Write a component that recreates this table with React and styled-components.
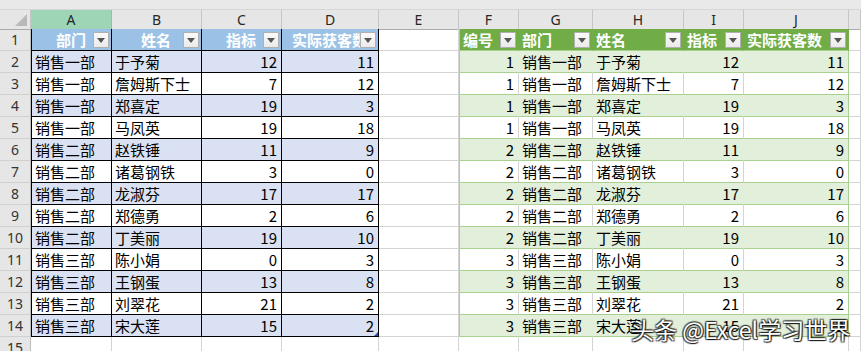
import React from "react";
import styled, { createGlobalStyle, css } from "styled-components";

const COLS = ["A", "B", "C", "D", "E", "F", "G", "H", "I", "J", ""];
const TEMPLATE = "31px 81px 90px 80px 97px 80px 60px 74px 91px 60px 105px 12px";

const GRID = "#d4d4d4";
const BLUE_HEAD = "#9bc2e6";
const BLUE_BAND = "#d9e1f2";
const GREEN_HEAD = "#70ad47";
const GREEN_BAND = "#e2efda";
const GREEN_LINE = "#a9d08e";

const rows = [
  [1, "销售一部", "于予菊", 12, 11],
  [1, "销售一部", "詹姆斯下士", 7, 12],
  [1, "销售一部", "郑喜定", 19, 3],
  [1, "销售一部", "马凤英", 19, 18],
  [2, "销售二部", "赵铁锤", 11, 9],
  [2, "销售二部", "诸葛钢铁", 3, 0],
  [2, "销售二部", "龙淑芬", 17, 17],
  [2, "销售二部", "郑德勇", 2, 6],
  [2, "销售二部", "丁美丽", 19, 10],
  [3, "销售三部", "陈小娟", 0, 3],
  [3, "销售三部", "王钢蛋", 13, 8],
  [3, "销售三部", "刘翠花", 21, 2],
  [3, "销售三部", "宋大莲", 15, 2],
];

const GlobalStyle = createGlobalStyle`
  html, body {
    margin: 0;
    padding: 0;
    background: #ffffff;
    overflow: hidden;
  }
  body {
    font-family: "Noto Sans CJK SC", "Noto Sans", sans-serif;
  }
`;

const Sheet = styled.div`
  position: relative;
  width: 861px;
  height: 351px;
  overflow: hidden;
  background: #ffffff;
`;

const TopStrip = styled.div`
  height: 10px;
  background: #e9e9e9;
  border-bottom: 1px solid #d6d6d6;
  box-sizing: border-box;
`;

const Row = styled.div`
  display: grid;
  grid-template-columns: ${TEMPLATE};
  height: ${({ $h }) => $h}px;
`;

const Corner = styled.div`
  background: #e6e6e6;
  border-right: 1px solid #c6c6c6;
  border-bottom: 1px solid #ababab;
  box-sizing: border-box;
  position: relative;
  &::after {
    content: "";
    position: absolute;
    right: 3px;
    bottom: 3px;
    border-style: solid;
    border-width: 0 0 12px 12px;
    border-color: transparent transparent #b9b9b9 transparent;
  }
`;

const ColHead = styled.div`
  background: ${({ $selected }) => ($selected ? "#9fd5b7" : "#e6e6e6")};
  border-right: 1px solid ${({ $selected }) => ($selected ? "#8cc4a5" : "#c6c6c6")};
  border-bottom: 1px solid #ababab;
  box-sizing: border-box;
  display: flex;
  align-items: center;
  justify-content: center;
  font-size: 14px;
  color: #262626;
  font-family: "Noto Sans", "Liberation Sans", sans-serif;
`;

const RowHead = styled.div`
  background: #e6e6e6;
  border-right: 1px solid #bdbdbd;
  border-bottom: 1px solid #d0d0d0;
  box-sizing: border-box;
  display: flex;
  align-items: center;
  justify-content: center;
  font-size: 14px;
  color: #333333;
  font-family: "Noto Sans", "Liberation Sans", sans-serif;
`;

const blueCell = css`
  border-right: 1px solid #000;
  border-bottom: 1px solid #000;
  ${({ $first }) => $first && "border-left: 1px solid #000;"}
  background: ${({ $header, $band }) =>
    $header ? BLUE_HEAD : $band ? BLUE_BAND : "#ffffff"};
`;

const greenCell = css`
  border-bottom: 1px solid ${GREEN_LINE};
  ${({ $first }) => $first && `border-left: 1px solid ${GREEN_LINE};`}
  border-right: 1px solid
    ${({ $header, $band, $last }) =>
      $last
        ? $header
          ? GREEN_HEAD
          : GREEN_LINE
        : $header
        ? GREEN_HEAD
        : $band
        ? GREEN_BAND
        : GRID};
  background: ${({ $header, $band }) =>
    $header ? GREEN_HEAD : $band ? GREEN_BAND : "#ffffff"};
`;

const Cell = styled.div`
  position: relative;
  box-sizing: border-box;
  border-right: 1px solid ${GRID};
  border-bottom: 1px solid ${GRID};
  display: flex;
  align-items: center;
  justify-content: ${({ $align }) =>
    $align === "right" ? "flex-end" : $align === "center" ? "center" : "flex-start"};
  padding: 0 4px 0 3px;
  font-size: 15px;
  line-height: 21px;
  color: ${({ $header }) => ($header ? "#ffffff" : "#000000")};
  font-weight: ${({ $header }) => ($header ? 700 : 400)};
  white-space: nowrap;
  overflow: hidden;
  ${({ $table }) => ($table === "blue" ? blueCell : $table === "green" ? greenCell : "")}
`;

const FilterButton = styled.span`
  position: absolute;
  right: 2px;
  top: 3px;
  width: 16px;
  height: 16px;
  box-sizing: border-box;
  background: linear-gradient(#fafafa, #eaeaea);
  border: 1px solid #b0b0b0;
  display: flex;
  align-items: center;
  justify-content: center;
  &::after {
    content: "";
    border-style: solid;
    border-width: 5px 4px 0 4px;
    border-color: #555 transparent transparent transparent;
    margin-top: 1px;
  }
`;

const ResizeHandle = styled.span`
  position: absolute;
  right: 0;
  bottom: 0;
  border-style: solid;
  border-width: 0 0 4px 4px;
  border-color: transparent transparent #2f4fa0 transparent;
`;

const Watermark = styled.div`
  position: absolute;
  left: 631px;
  top: 315px;
  font-size: 23px;
  line-height: 28px;
  color: #ffffff;
  white-space: nowrap;
  font-family: "Noto Sans CJK SC", sans-serif;
  text-shadow: 1px 1px 1px rgba(0, 0, 0, 0.8), -1px -1px 1px rgba(0, 0, 0, 0.65),
    1px -1px 1px rgba(0, 0, 0, 0.65), -1px 1px 1px rgba(0, 0, 0, 0.65);
`;

const blueHeaders = ["部门", "姓名", "指标", "实际获客数"];
const greenHeaders = ["编号", "部门", "姓名", "指标", "实际获客数"];

const HeaderRow = () => (
  <Row $h={22}>
    <RowHead>1</RowHead>
    {blueHeaders.map((t, i) => (
      <Cell key={t} $table="blue" $header $first={i === 0} $align="center">
        {t}
        <FilterButton />
      </Cell>
    ))}
    <Cell />
    {greenHeaders.map((t, i) => (
      <Cell key={t} $table="green" $header $first={i === 0} $last={i === 4}>
        {t}
        <FilterButton />
      </Cell>
    ))}
    <Cell />
  </Row>
);

const DataRow = ({ n, data, last }) => {
  const [no, dept, name, target, actual] = data;
  const band = n % 2 === 0;
  return (
    <Row $h={22}>
      <RowHead>{n}</RowHead>
      <Cell $table="blue" $band={band} $first>
        {dept}
      </Cell>
      <Cell $table="blue" $band={band}>
        {name}
      </Cell>
      <Cell $table="blue" $band={band} $align="right">
        {target}
      </Cell>
      <Cell $table="blue" $band={band} $align="right">
        {actual}
        {last && <ResizeHandle />}
      </Cell>
      <Cell />
      <Cell $table="green" $band={band} $first $align="right">
        {no}
      </Cell>
      <Cell $table="green" $band={band}>
        {dept}
      </Cell>
      <Cell $table="green" $band={band}>
        {name}
      </Cell>
      <Cell $table="green" $band={band} $align="right">
        {target}
      </Cell>
      <Cell $table="green" $band={band} $last $align="right">
        {actual}
        {last && <ResizeHandle />}
      </Cell>
      <Cell />
    </Row>
  );
};

const App = () => {
  return (
    <>
      <GlobalStyle />
      <Sheet>
        <TopStrip />
        <Row $h={19}>
          <Corner />
          {COLS.map((c, i) => (
            <ColHead key={i} $selected={c === "A"}>
              {c}
            </ColHead>
          ))}
        </Row>
        <HeaderRow />
        {rows.map((r, i) => (
          <DataRow key={i} n={i + 2} data={r} last={i === rows.length - 1} />
        ))}
        <Row $h={22}>
          <RowHead>15</RowHead>
          {COLS.map((c, i) => (
            <Cell key={i} />
          ))}
        </Row>
        <Watermark>头条 @Excel学习世界</Watermark>
      </Sheet>
    </>
  );
};

export default App;
